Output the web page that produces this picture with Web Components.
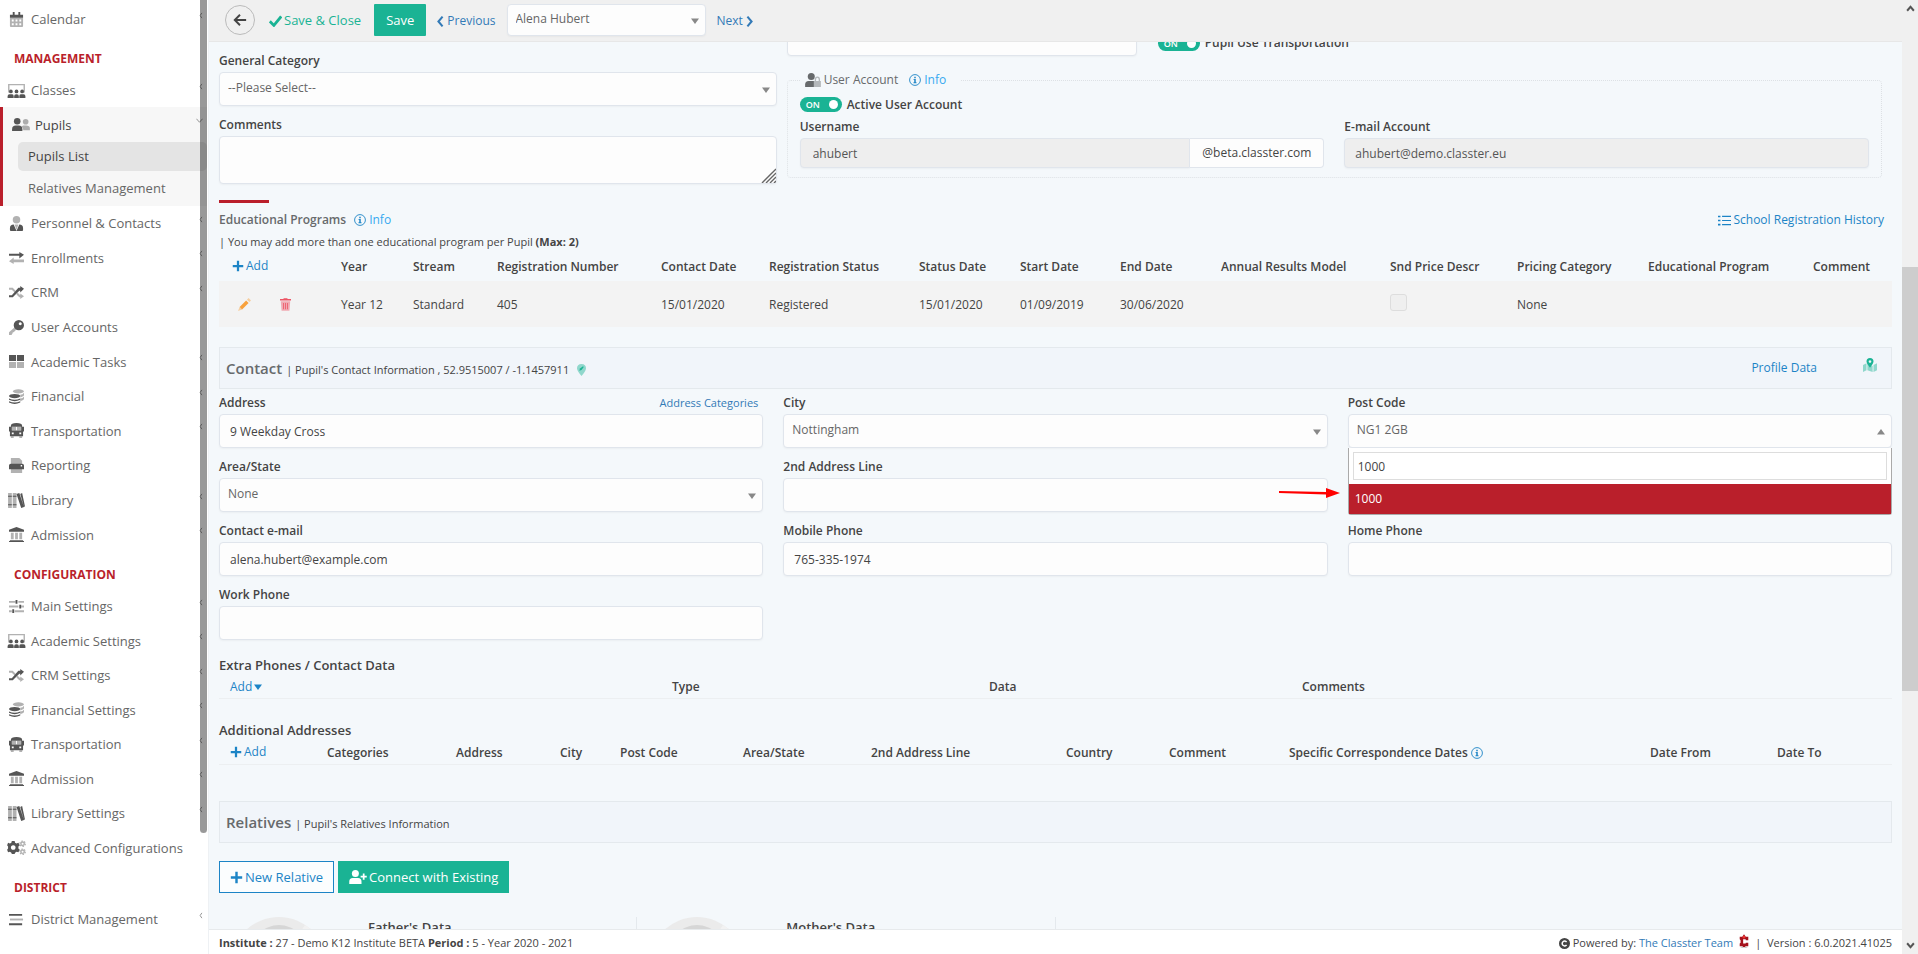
<!DOCTYPE html>
<html lang="en">
  <head>
    <meta charset="UTF-8" />
    <meta name="viewport" content="width=device-width, initial-scale=1.0" />
    <title>Pupil</title>
    <style>
      body {
        margin: 0;
        font: 12px/20px 'Open Sans', 'Noto Sans', sans-serif;
        color: #444;
        background: #f4f8fb;
      }
    </style>
  </head>
  <body>
    <app-shell>
      <side-nav slot="side"></side-nav>
      <top-bar slot="top"></top-bar>
      <pupil-form></pupil-form>
      <page-footer slot="bottom"></page-footer>
      <page-scroll slot="scroll"></page-scroll>
    </app-shell>

    <template id="app-shell">
      <style>
        :host {
          display: grid;
          grid-template-columns: 209px minmax(0, 1fr) 16px;
          height: 100vh;
          overflow: hidden;
        }
        .page {
          display: grid;
          grid-template-rows: auto minmax(0, 1fr) auto;
          min-height: 0;
        }
        .view {
          overflow: hidden;
        }
      </style>
      <slot name="side"></slot>
      <div class="page">
        <slot name="top"></slot>
        <main class="view"><slot></slot></main>
        <slot name="bottom"></slot>
      </div>
      <slot name="scroll"></slot>
    </template>

    <template id="top-bar">
      <style>
        :host {
          display: flex;
          align-items: center;
          height: 40px;
          padding: 0 0 1px 16px;
          background: #f0f0f0;
          border-bottom: 1px solid #e7e7e7;
          font-size: 13px;
        }
        button {
          font: inherit;
          cursor: pointer;
        }
        .back {
          display: grid;
          place-items: center;
          width: 30px;
          height: 30px;
          padding: 0;
          border: 1px solid #bbb;
          border-radius: 50%;
          background: none;
          color: #444;
        }
        .close {
          display: flex;
          align-items: center;
          gap: 2px;
          margin: 0 13px 0 14px;
          padding: 0;
          border: 0;
          background: none;
          color: #1ab394;
        }
        .save {
          height: 32px;
          padding: 0 12px;
          border: 0;
          border-radius: 1px;
          background: #1ab394;
          color: #fff;
        }
        a {
          display: flex;
          align-items: center;
          gap: 3px;
          margin: 2px 11px 0;
          color: #337ab7;
          font-size: 12px;
          text-decoration: none;
        }
        select-field {
          width: 199px;
          font-size: 12px;
        }
      </style>
      <button class="back" aria-label="Back"><app-icon name="back" size="14"></app-icon></button>
      <button class="close"><app-icon name="check" size="13"></app-icon>Save &amp; Close</button>
      <button class="save">Save</button>
      <a href="#"><app-icon name="prev" size="11"></app-icon>Previous</a>
      <select-field name="Pupil" value="Alena Hubert" height="32"></select-field>
      <a href="#">Next<app-icon name="next" size="11"></app-icon></a>
    </template>

    <template id="pupil-form">
      <style>
        /* the form is scrolled 20px under the top bar */
        :host {
          display: block;
          margin-top: -20px;
          padding: 0 10px;
        }
        a {
          color: #1c84c6;
          text-decoration: none;
        }
        .top {
          display: grid;
          grid-template-columns: minmax(0, 1fr) minmax(0, 2fr);
        }
        .general {
          display: grid;
          gap: 8px;
          align-content: start;
          padding-top: 28px;
        }
        .account {
          padding-left: 10px;
        }
        .transport {
          display: grid;
          grid-template-columns: 350px 1fr;
          gap: 21px;
          align-items: center;
          margin-bottom: 14px;
        }
        .transport toggle-switch {
          padding-top: 8px;
        }
        fieldset {
          min-width: 0;
          margin: 0 10px 0 0;
          padding: 7px 12px 9px 12px;
          border: 1px dotted #dde1e5;
          border-radius: 4px;
        }
        legend {
          display: flex;
          align-items: center;
          gap: 3px;
          height: 20px;
          padding: 0 14px 0 5px;
          color: #676a6c;
        }
        legend info-link {
          margin-left: 8px;
        }
        .pair {
          display: grid;
          grid-template-columns: minmax(0, 1fr) minmax(0, 1fr);
          gap: 20px;
          margin-top: 4px;
        }
        .mark {
          width: 50px;
          height: 3px;
          margin: 16px 0 7px;
          background: #ba1f2b;
        }
        .heading {
          display: flex;
          align-items: center;
          gap: 8px;
        }
        h3,
        h4 {
          margin: 0;
          font-size: 12px;
          font-weight: 600;
          color: #676a6c;
        }
        h4 {
          font-size: 13px;
          color: #444;
        }
        .history {
          display: flex;
          align-items: center;
          gap: 2px;
          margin-left: auto;
          padding-right: 8px;
        }
        p {
          margin: 2px 0 0;
          font-size: 11px;
        }
        p b {
          font-weight: 700;
        }
        panel-bar {
          margin-top: 20px;
        }
        .map {
          color: #1ab394;
        }
        .contact {
          display: grid;
          grid-template-columns: repeat(3, minmax(0, 1fr));
          gap: 8px 20px;
          margin: 3px 0 15px;
        }
        .work {
          grid-column: 1;
        }
        phone-table {
          margin-bottom: 21px;
        }
        address-table {
          margin-bottom: 36px;
        }
        .actions {
          display: flex;
          gap: 4px;
          margin: 18px 0 24px;
        }
        button {
          display: flex;
          align-items: center;
          gap: 2px;
          height: 32px;
          padding: 0 10px;
          border: 1px solid #1c84c6;
          background: #fbfdfe;
          color: #1c84c6;
          font: 13px/20px 'Open Sans', 'Noto Sans', sans-serif;
        }
        .primary {
          border-color: #1ab394;
          background: #1ab394;
          color: #fff;
        }
        .people {
          display: grid;
          grid-template-columns: repeat(4, minmax(0, 1fr));
        }
      </style>
      <section class="top">
        <div class="general">
          <select-field label="General Category" value="--Please Select--"></select-field>
          <text-area label="Comments"></text-area>
        </div>
        <div class="account">
          <div class="transport">
            <text-field name="Transportation code"></text-field>
            <toggle-switch>Pupil Use Transportation</toggle-switch>
          </div>
          <fieldset>
            <legend>
              <app-icon name="userlock" size="14"></app-icon>User Account
              <info-link>Info</info-link>
            </legend>
            <toggle-switch>Active User Account</toggle-switch>
            <div class="pair">
              <text-field label="Username" value="ahubert" addon="@beta.classter.com" disabled></text-field>
              <text-field label="E-mail Account" value="ahubert@demo.classter.eu" disabled></text-field>
            </div>
          </fieldset>
        </div>
      </section>

      <div class="mark"></div>
      <div class="heading">
        <h3>Educational Programs</h3>
        <info-link>Info</info-link>
        <a class="history" href="#"><app-icon name="list" size="13"></app-icon>School Registration History</a>
      </div>
      <p>| You may add more than one educational program per Pupil <b>(Max: 2)</b></p>
      <program-table></program-table>

      <panel-bar heading="Contact" note="Pupil's Contact Information , 52.9515007 / -1.1457911">
        <app-icon slot="mark" name="pin" size="12"></app-icon>
        <a href="#">Profile Data</a>
        <a class="map" href="#" aria-label="Map"><app-icon name="map" size="14"></app-icon></a>
      </panel-bar>
      <section class="contact">
        <text-field label="Address" value="9 Weekday Cross" link="Address Categories"></text-field>
        <select-field label="City" value="Nottingham"></select-field>
        <select-field label="Post Code" value="NG1 2GB" open>
          <search-menu slot="menu" value="1000"></search-menu>
        </select-field>
        <select-field label="Area/State" value="None"></select-field>
        <text-field label="2nd Address Line"></text-field>
        <text-field class="work" label="Contact e-mail" value="alena.hubert@example.com"></text-field>
        <text-field label="Mobile Phone" value="765-335-1974"></text-field>
        <text-field label="Home Phone"></text-field>
        <text-field class="work" label="Work Phone"></text-field>
      </section>

      <h4>Extra Phones / Contact Data</h4>
      <phone-table></phone-table>
      <h4>Additional Addresses</h4>
      <address-table></address-table>

      <panel-bar heading="Relatives" note="Pupil's Relatives Information"></panel-bar>
      <div class="actions">
        <button><app-icon name="plus" size="13"></app-icon>New Relative</button>
        <button class="primary"><app-icon name="userplus" size="14"></app-icon>Connect with Existing</button>
      </div>
      <section class="people">
        <relative-card>Father's Data</relative-card>
        <relative-card>Mother's Data</relative-card>
      </section>
    </template>

    <script>
      // two-tone icons on a 16px high grid, .s is the lighter tone
      const icons = {
        calendar: [16, '<path d="M1 3h14v3H1zM4 0h2v3H4zM10 0h2v3h-2z"/><path class="s" d="M1 6v9q0 1 1 1h12q1 0 1-1V6zm2 2h2v2H3zm4 0h2v2H7zm4 0h2v2h-2zM3 12h2v2H3zm4 0h2v2H7zm4 0h2v2h-2z" fill-rule="evenodd"/>'],
        classes: [20, '<path class="s" d="M1 1h18v9h-1.500V2.500H2.500V10H1z"/><circle cx="4" cy="9" r="2"/><circle cx="10" cy="9" r="2"/><circle cx="16" cy="9" r="2"/><path d="M.5 16v-2q0-2 2-2h3q1.500 0 1.500 2v2zM7.500 16v-2q0-2 2-2h1q2 0 2 2v2zM13 16v-2q0-2 1.500-2h3q2 0 2 2v2z"/>'],
        pupils: [20, '<circle cx="6.500" cy="4.500" r="3.500"/><path d="M1 15v-2q0-4 4-4h3q4 0 4 4v2z"/><g class="s"><circle cx="15.500" cy="5" r="3"/><path d="M13 9h3q4 0 4 3v2h-7q0-3-2-4z"/></g>'],
        person: [16, '<path class="s" d="M8 0a4 4 0 0 1 0 8a4 4 0 0 1 0-8zM6 9h4l-2 6z"/><path d="M5 9l3 7l3-7q4 0 4 4v2q0 1-1 1H2q-1 0-1-1v-2q0-4 4-4z"/>'],
        enroll: [16, '<path d="M0 4h11V2l5 3l-5 4V6H0z"/><path class="s" d="M16 10H5V8l-5 4l5 3v-2h11z"/>'],
        shuffle: [16, '<path class="s" d="M0 3h4l3 3-1 2-3-3H0zM8 10l1-2 3 3v-2l4 3-4 3v-2h-1z"/><path d="M0 11h3l7-8h2V1l4 3-4 4V6h-1l-7 7H0z"/>'],
        key: [16, '<path class="s" d="M7 7l2 2-4 4-1 0v1l-1 1v1H0v-3z"/><path fill-rule="evenodd" d="M10.500 0a5.500 5.500 0 1 1 0 11a5.500 5.500 0 0 1 0-11zm1.500 2.500a1.600 1.600 0 1 0 .01 0z"/>'],
        tasks: [16, '<path d="M0 1h7.500v6.500H0zM8.500 1H16v6.500H8.500z"/><path class="s" d="M0 8.500h7.500V15H0zM8.500 8.500H16V15H8.500z"/>'],
        coins: [16, '<g class="s"><ellipse cx="10" cy="2.500" rx="6" ry="2.200"/><path d="M12 6q3 0 4-2v3q-1 1-4 2zM12 10q3 0 4-2v3q-1 1-4 2z"/></g><ellipse cx="6" cy="7.500" rx="6" ry="2.300"/><path d="M0 10q6 3 12 0v1.500q-6 3-12 0zM0 13q6 3 12 0v1.500q-6 3-12 0z"/>'],
        bus: [16, '<path fill-rule="evenodd" d="M8 0q6 0 6 3v1h2v5h-1v5H1V9H0V4h2V3q0-3 6-3zM3 4v4h10V4zm0 6v2h2v-2zm8 0v2h2v-2z"/><path class="s" d="M3 4h4.500v4H3zM8.500 4H13v4H8.500zM2 14h3v2H2zM11 14h3v2h-3z"/>'],
        printer: [16, '<path class="s" d="M2 0h9l3 3v4H2zM2 11h12v5H2z"/><path fill-rule="evenodd" d="M2 6h12q2 0 2 2v4H0V8q0-2 2-2zm10.500 1.500v1.500h1.500V7.500z"/>'],
        books: [18, '<g class="s"><path d="M0 0h4v16H0zM5 0h4v16H5z"/></g><path d="M0 3h4v1H0zM0 12h4v1H0zM5 3h4v1H5zM5 12h4v1H5zM9 1l3-1 5 15-3 1zM13 1l2-1 3 14-1 1z"/>'],
        bank: [16, '<path d="M8 0l8 3v2H0V3zM1 14h14v1h1v1H0v-1h1z"/><path class="s" d="M2 6h3v7H2zM6.500 6h3v7h-3zM11 6h3v7h-3z"/>'],
        sliders: [16, '<path class="s" d="M0 2h7v2H0zM10 2h6v2h-6zM0 7h10v2H0zM13 7h3v2h-3zM0 12h3v2H0zM6 12h10v2H6z"/><path d="M7 1h2v4H7zM11 6h2v4h-2zM3.500 11h2v4h-2z"/>'],
        cogs: [20, '<path fill-rule="evenodd" d="M5 1h3l.5 2 1.500.8 2-.8 1.500 2.500L12 7v2l1.500 1.500L12 13l-2-.5-1.500 1L8 15H5l-.5-1.500-1.500-1L1 13l-1-2.500L1 9V7L0 5.500 1 3l2 .8L4.500 3zM6.500 5.500a2.500 2.500 0 1 0 .01 0z"/><g fill="none" stroke="currentColor" class="s" stroke-width="1.500"><circle cx="16.500" cy="4" r="2.800" stroke-dasharray="1.500 1.400"/><circle cx="16.500" cy="12.500" r="2.800" stroke-dasharray="1.500 1.400"/><circle cx="16.500" cy="4" r="1.800"/><circle cx="16.500" cy="12.500" r="1.800"/></g>'],
        bars: [16, '<path d="M0 2h14v2H0zM0 12h14v2H0z"/><path class="s" d="M1 7h14v2H1z"/>'],
        back: [16, '<path d="M8 2L2 8l6 6M2 8h13" fill="none" stroke="currentColor" stroke-width="2.200"/>'],
        check: [16, '<path d="M1 9l5 5L15 3" fill="none" stroke="currentColor" stroke-width="3.400"/>'],
        prev: [10, '<path d="M8 1L2 8l6 7" fill="none" stroke="currentColor" stroke-width="3"/>'],
        next: [10, '<path d="M2 1l6 7-6 7" fill="none" stroke="currentColor" stroke-width="3"/>'],
        left: [8, '<path d="M6 2L2 8l4 6" fill="none" stroke="currentColor" stroke-width="2"/>'],
        down: [16, '<path d="M1 4l7 8 7-8" fill="none" stroke="currentColor" stroke-width="2"/>'],
        up: [16, '<path d="M2 12l6-7 6 7" fill="none" stroke="currentColor" stroke-width="3.500"/>'],
        downbold: [16, '<path d="M2 4l6 7 6-7" fill="none" stroke="currentColor" stroke-width="3.500"/>'],
        tri: [16, '<path d="M0 3h16L8 14z"/>'],
        triup: [16, '<path d="M0 13h16L8 2z"/>'],
        plus: [16, '<path d="M6.500 1h3v5.500H15v3H9.500V15h-3V9.500H1v-3h5.500z"/>'],
        info: [16, '<circle cx="8" cy="8" r="7.200" fill="none" stroke="currentColor" stroke-width="1.200"/><path d="M7 3.500h2v2H7zM6 6.500h3V11h1v1.200H6V11h1V7.700H6z"/>'],
        list: [16, '<path d="M0 2h3v2H0zM0 7h3v2H0zM0 12h3v2H0zM5 2.300h11v1.400H5zM5 7.300h11v1.400H5zM5 12.300h11v1.400H5z"/>'],
        pencil: [16, '<path class="s" d="M11 2l2-2 3 3-2 2zM2 11l3 3-5 2z"/><path d="M10 3l3 3-8 8-3-3z"/>'],
        trash: [14, '<path d="M0 1h4l1-1h4l1 1h4v2H0z"/><path class="s" d="M1 4h12l-1 12H2z"/><path d="M4 6h1v8H4zM6.500 6h1v8h-1zM9 6h1v8H9z"/>'],
        pin: [12, '<path class="s" d="M6 0q6 0 6 6q0 3-6 10Q0 9 0 6q0-6 6-6z"/><path d="M3 9l1-3 4-3 1 1-3 4z"/>'],
        map: [16, '<path class="s" d="M0 8l4-2v8l-4 2zM5 6l6 3v7l-6-2zM12 8l4-2v8l-4 2z"/><path fill-rule="evenodd" d="M8 0q4 0 4 4q0 2-4 7Q4 6 4 4q0-4 4-4zm0 2.500a1.500 1.500 0 1 0 .01 0z"/>'],
        userlock: [18, '<circle cx="7" cy="4" r="4"/><path d="M0 16v-3q0-4 4-4h6v7z"/><path class="s" fill-rule="evenodd" d="M11 9V7.500q0-3.500 3-3.500t3 3.500V9h1v7h-8V9zm1.500 0h3V7.500q0-2-1.500-2t-1.500 2z"/>'],
        userplus: [20, '<circle cx="7" cy="4" r="4"/><path d="M0 16v-3q0-4 4-4h6q4 0 4 4v3zM15.500 4h2v2.500H20v2h-2.500V11h-2V8.500H13v-2h2.500z"/>'],
        copy: [16, '<circle cx="8" cy="8" r="8"/><path d="M11 6a3.500 3.500 0 1 0 0 4" fill="none" stroke="#fff" stroke-width="2.200"/>'],
        logo: [14, '<path d="M2 3h3l2-3 2 3h3v4H9V6H6v5h3v-1h3v4H9q-2 2-4 0H2v-3l1-1V7L2 6z" fill="#a5121c"/><circle cx="7" cy="3.500" r="1.500" fill="#e33"/><path d="M3 15q4 2 8 0" stroke="#bbb" fill="none"/>']
      }

      class AppIcon extends HTMLElement {
        constructor() {
          super()
          const [w, body] = icons[this.getAttribute('name')]
          const size = Number(this.getAttribute('size') || 15)
          this.attachShadow({ mode: 'open' }).innerHTML = `
            <style>
              :host { display: inline-flex; flex: none; }
              svg { display: block; fill: currentColor; }
              .s { opacity: 0.45; }
            </style>
            <svg width="${Math.round((size * w) / 16)}" height="${size}" viewBox="0 0 ${w} 16" aria-hidden="true">${body}</svg>`
        }
      }

      // shared rules of labels and boxes
      const fieldStyle = `
        :host { display: block; min-width: 0; }
        .head { display: flex; justify-content: space-between; height: 22px; line-height: 22px; padding-right: 5px; }
        label { font-weight: 600; color: #444; }
        input, select, textarea {
          box-sizing: border-box; width: 100%; margin: 0; border: 1px solid #e0e5ec; border-radius: 4px;
          background: #fdfdfd; color: #444; font: inherit; box-shadow: 0 1px 2px rgba(0, 0, 0, 0.04);
        }
        a { color: #337ab7; font-size: 11px; text-decoration: none; }
      `

      class TextField extends HTMLElement {
        constructor() {
          super()
          const label = this.getAttribute('label')
          const link = this.getAttribute('link')
          const addon = this.getAttribute('addon')
          this.attachShadow({ mode: 'open' }).innerHTML = `
            <style>
              ${fieldStyle}
              input { height: 34px; padding: 0 10px; }
              input:disabled { height: 30px; background: #eee; color: #555; }
              .box { display: flex; }
              .with-addon input { flex: 1; min-width: 0; border-radius: 4px 0 0 4px; padding-left: 12px; }
              .addon { height: 28px; line-height: 28px; padding: 0 12px; background: #fdfdfd; border: 1px solid #e0e5ec; border-left: 0; border-radius: 0 4px 4px 0; }
            </style>
            ${label ? `<div class="head"><label for="f">${label}</label>${link ? `<a href="#">${link}</a>` : ''}</div>` : ''}
            <div class="box ${addon ? 'with-addon' : ''}">
              <input id="f" type="text" value="${this.getAttribute('value') || ''}"
                ${this.hasAttribute('disabled') ? 'disabled' : ''} ${label ? '' : `aria-label="${this.getAttribute('name')}"`} />
              ${addon ? `<span class="addon">${addon}</span>` : ''}
            </div>`
        }
      }

      class SelectField extends HTMLElement {
        constructor() {
          super()
          const label = this.getAttribute('label')
          const open = this.hasAttribute('open')
          this.attachShadow({ mode: 'open' }).innerHTML = `
            <style>
              ${fieldStyle}
              .box { position: relative; display: grid; align-items: center; }
              select { grid-area: 1 / 1; appearance: none; height: ${this.getAttribute('height') || 34}px; padding: 0 24px 3px 8px; color: #666; }
              app-icon { grid-area: 1 / 1; justify-self: end; margin: 2px 7px 0 0; color: #888; pointer-events: none; }
              ::slotted(*) { position: absolute; top: 100%; left: 0; right: 0; z-index: 2; }
            </style>
            ${label ? `<div class="head"><label for="f">${label}</label></div>` : ''}
            <div class="box">
              <select id="f" ${label ? '' : `aria-label="${this.getAttribute('name')}"`}><option>${this.getAttribute('value')}</option></select>
              <app-icon name="${open ? 'triup' : 'tri'}" size="8"></app-icon>
              <slot name="menu"></slot>
            </div>`
        }
      }

      class TextArea extends HTMLElement {
        constructor() {
          super()
          this.attachShadow({ mode: 'open' }).innerHTML = `
            <style>
              ${fieldStyle}
              .box { display: grid; align-items: end; }
              textarea { grid-area: 1 / 1; display: block; height: 48px; resize: none; }
              svg { grid-area: 1 / 1; justify-self: end; margin: 0 1px 1px 0; }
            </style>
            <div class="head"><label for="f">${this.getAttribute('label')}</label></div>
            <div class="box">
              <textarea id="f"></textarea>
              <svg width="15" height="15" viewBox="0 0 15 15" stroke="#666" stroke-width="1.400" aria-hidden="true"><path d="M1 15L15 1M5 15L15 5M9 15l6-6M13 15l2-2"/></svg>
            </div>`
        }
      }

      // open list of a searchable select, with a pointer to the highlighted option
      class SearchMenu extends HTMLElement {
        constructor() {
          super()
          const value = this.getAttribute('value')
          this.attachShadow({ mode: 'open' }).innerHTML = `
            <style>
              :host { display: block; background: #fff; border: 1px solid #aaa; border-top: 0; border-radius: 0 0 3px 3px; }
              input { box-sizing: border-box; display: block; width: calc(100% - 8px); height: 28px; margin: 4px; padding: 0 4px; border: 1px solid #ddd; font: inherit; color: #444; }
              ul { margin: 0; padding: 0; list-style: none; }
              li { height: 30px; line-height: 30px; padding-left: 6px; background: #ba1f2b; color: #fff; }
              svg { position: absolute; right: calc(100% + 9px); bottom: 16px; }
            </style>
            <input type="search" aria-label="Search" value="${value}" />
            <ul role="listbox"><li role="option">${value}</li></ul>
            <svg width="61" height="10" viewBox="0 0 61 10" fill="#f00" aria-hidden="true"><path d="M0 3l47 1V0l14 5-14 5V6.500L0 5z"/></svg>`
        }
      }

      class ToggleSwitch extends HTMLElement {
        constructor() {
          super()
          this.attachShadow({ mode: 'open' }).innerHTML = `
            <style>
              :host { display: block; }
              label { display: flex; align-items: center; gap: 5px; height: 15px; font-weight: 600; }
              input { position: absolute; opacity: 0; width: 42px; height: 15px; margin: 0; }
              .track { display: flex; align-items: center; justify-content: space-between; box-sizing: border-box; width: 42px; height: 15px; padding: 0 4px 0 6px; border-radius: 8px; background: #1ab394; color: #fff; font-size: 9px; line-height: 15px; }
              .knob { width: 9px; height: 9px; border-radius: 50%; background: #fff; }
            </style>
            <label><input type="checkbox" checked /><span class="track">ON<span class="knob"></span></span><slot></slot></label>`
        }
      }

      class InfoLink extends HTMLElement {
        constructor() {
          super()
          this.attachShadow({ mode: 'open' }).innerHTML = `
            <style>
              :host { display: inline-flex; }
              a { display: flex; align-items: center; gap: 3px; color: #36a9f0; text-decoration: none; }
              app-icon { color: #1c84c6; }
            </style>
            <a href="#"><app-icon name="info" size="12"></app-icon><slot></slot></a>`
        }
      }

      class PanelBar extends HTMLElement {
        constructor() {
          super()
          this.attachShadow({ mode: 'open' }).innerHTML = `
            <style>
              :host { display: flex; align-items: center; gap: 4px; box-sizing: border-box; height: 42px; padding: 0 14px 0 6px; background: #f1f5fa; border: 1px solid #e4e9ed; }
              h2 { margin: 0; font-size: 15px; font-weight: 600; color: #676a6c; }
              .note { padding-top: 3px; font-size: 11px; }
              .links { display: flex; align-items: center; gap: 46px; margin-left: auto; }
              ::slotted(app-icon) { margin: 3px 0 0 4px; color: #1ab394; }
            </style>
            <h2>${this.getAttribute('heading')}</h2>
            <span class="note">| ${this.getAttribute('note')}</span>
            <slot name="mark"></slot>
            <div class="links"><slot></slot></div>`
        }
      }

      const tableStyle = `
        :host { display: block; }
        table { width: 100%; table-layout: fixed; border-collapse: collapse; }
        th, td { padding: 0 0 0 8px; text-align: left; white-space: nowrap; font-weight: 600; }
        th:first-child { padding-left: 11px; font-weight: 400; }
        th { height: 23px; border-bottom: 1px solid #eceff1; }
        td { font-weight: 400; }
        a { display: inline-flex; align-items: center; gap: 2px; color: #1c84c6; text-decoration: none; }
        info-link { vertical-align: top; }
      `
      const columns = (list) => `<colgroup>${list.map((c) => `<col style="width: ${c[0]}px" />`).join('')}</colgroup>`
      const headCells = (list) => list.map((c) => `<th>${c[1]}</th>`).join('')
      const add = '<a href="#"><app-icon name="plus" size="12"></app-icon>Add</a>'

      class ProgramTable extends HTMLElement {
        constructor() {
          super()
          const list = [
            [114, add, ''], [72, 'Year', 'Year 12'], [84, 'Stream', 'Standard'], [164, 'Registration Number', '405'],
            [108, 'Contact Date', '15/01/2020'], [150, 'Registration Status', 'Registered'], [101, 'Status Date', '15/01/2020'],
            [100, 'Start Date', '01/09/2019'], [101, 'End Date', '30/06/2020'], [169, 'Annual Results Model', ''],
            [127, 'Snd Price Descr', '<input type="checkbox" aria-label="Snd Price Descr" />'], [131, 'Pricing Category', 'None'],
            [165, 'Educational Program', ''], [87, 'Comment', '']
          ]
          this.attachShadow({ mode: 'open' }).innerHTML = `
            <style>
              ${tableStyle}
              th { height: 29px; border: 0; }
              th:first-child { padding-left: 13px; }
              td { height: 45px; padding-top: 1px; background: #f3f3f3; }
              .tools { display: flex; align-items: center; gap: 29px; padding-left: 11px; }
              .edit { color: #f8a13c; }
              .delete { color: #ed5565; }
              input { display: block; appearance: none; width: 17px; height: 17px; margin: 0 0 5px; border: 1px solid #ddd; border-radius: 3px; background: #efefef; }
            </style>
            <table>
              ${columns(list)}
              <thead><tr>${headCells(list)}</tr></thead>
              <tbody><tr>
                <td><div class="tools">
                  <a class="edit" href="#" aria-label="Edit"><app-icon name="pencil" size="13"></app-icon></a>
                  <a class="delete" href="#" aria-label="Delete"><app-icon name="trash" size="13"></app-icon></a>
                </div></td>
                ${list.slice(1).map((c) => `<td>${c[2]}</td>`).join('')}
              </tr></tbody>
            </table>`
        }
      }

      class PhoneTable extends HTMLElement {
        constructor() {
          super()
          const list = [
            [445, '<a href="#">Add<app-icon name="tri" size="8"></app-icon></a>'],
            [317, 'Type'], [313, 'Data'], [598, 'Comments']
          ]
          this.attachShadow({ mode: 'open' }).innerHTML = `
            <style>${tableStyle}</style>
            <table>${columns(list)}<thead><tr>${headCells(list)}</tr></thead></table>`
        }
      }

      class AddressTable extends HTMLElement {
        constructor() {
          super()
          const list = [
            [100, add], [129, 'Categories'], [104, 'Address'], [60, 'City'], [123, 'Post Code'], [128, 'Area/State'],
            [195, '2nd Address Line'], [103, 'Country'], [120, 'Comment'],
            [361, 'Specific Correspondence Dates <info-link></info-link>'], [127, 'Date From'], [123, 'Date To']
          ]
          this.attachShadow({ mode: 'open' }).innerHTML = `
            <style>${tableStyle} th { padding-top: 1px; } info-link { height: 20px; }</style>
            <table>${columns(list)}<thead><tr>${headCells(list)}</tr></thead></table>`
        }
      }

      class RelativeCard extends HTMLElement {
        constructor() {
          super()
          this.attachShadow({ mode: 'open' }).innerHTML = `
            <style>
              :host { display: flex; gap: 41px; padding-left: 12px; height: 120px; border-right: 1px solid #e4e9ed; }
              h4 { margin: 0; font-size: 13px; font-weight: 600; }
            </style>
            <svg width="96" height="96" viewBox="0 0 96 96" aria-hidden="true">
              <circle cx="48" cy="48" r="48" fill="#ebebeb"/><path d="M48 48L74 8a48 48 0 0 1 22 40z" fill="#f2f2f2"/>
              <circle cx="48" cy="36" r="28" fill="#d6d6d6"/><path d="M8 74q40-30 80 0a48 48 0 0 1-80 0z" fill="#d6d6d6"/>
            </svg>
            <h4><slot></slot></h4>`
        }
      }

      class PageFooter extends HTMLElement {
        constructor() {
          super()
          this.attachShadow({ mode: 'open' }).innerHTML = `
            <style>
              :host { display: flex; justify-content: space-between; padding: 3px 10px 1px; background: #fff; border-top: 1px solid #e7eaec; font-size: 11px; }
              b { font-weight: 700; }
              div { display: flex; align-items: center; gap: 3px; }
              a { color: #337ab7; text-decoration: none; }
              .logo { margin: 0 2px 4px; }
            </style>
            <span><b>Institute :</b> 27 - Demo K12 Institute BETA <b>Period :</b> 5 - Year 2020 - 2021</span>
            <div><app-icon name="copy" size="11"></app-icon>Powered by: <a href="#">The Classter Team</a>
              <app-icon class="logo" name="logo" size="14"></app-icon><span>| &nbsp;Version : 6.0.2021.41025</span></div>`
        }
      }

      class PageScroll extends HTMLElement {
        constructor() {
          super()
          this.attachShadow({ mode: 'open' }).innerHTML = `
            <style>
              :host { display: grid; grid-template-rows: 17px 250fr 424fr 246fr 17px; justify-items: center; background: #f0f0f0; color: #555; }
              app-icon { align-self: center; }
              .thumb { grid-row: 3; width: 100%; background: #cdcdcd; }
              .end { grid-row: 5; }
            </style>
            <app-icon name="up" size="9"></app-icon>
            <div class="thumb"></div>
            <app-icon class="end" name="downbold" size="9"></app-icon>`
        }
      }

      class NavItem extends HTMLElement {
        constructor() {
          super()
          const arrow = this.getAttribute('arrow')
          this.attachShadow({ mode: 'open' }).innerHTML = `
            <style>
              :host { display: flex; align-items: center; min-height: 34px; }
              :host([active]) { min-height: 35px; }
              a { display: flex; flex: 1; align-items: center; gap: 5px; padding-left: 6px; color: #666; text-decoration: none; }
              .icon { display: grid; place-items: center; width: 20px; color: #555; }
              :host([active]) a { padding-left: 7px; color: #444; }
              .arrow { margin: 0 4px 8px 0; color: #888; }
            </style>
            <a href="#"><span class="icon"><app-icon name="${this.getAttribute('icon')}" size="15"></app-icon></span><slot></slot></a>
            ${arrow ? `<app-icon class="arrow" name="${arrow}" size="7"></app-icon>` : ''}`
        }
      }

      class SideNav extends HTMLElement {
        constructor() {
          super()
          const item = ([icon, text, arrow = 'left']) => `<nav-item icon="${icon}" arrow="${arrow}">${text}</nav-item>`
          const management = [
            ['person', 'Personnel &amp; Contacts'], ['enroll', 'Enrollments'], ['shuffle', 'CRM'], ['key', 'User Accounts', ''],
            ['tasks', 'Academic Tasks'], ['coins', 'Financial'], ['bus', 'Transportation'], ['printer', 'Reporting', ''],
            ['books', 'Library'], ['bank', 'Admission']
          ]
          const configuration = [
            ['sliders', 'Main Settings'], ['classes', 'Academic Settings'], ['shuffle', 'CRM Settings'],
            ['coins', 'Financial Settings'], ['bus', 'Transportation'], ['bank', 'Admission'],
            ['books', 'Library Settings'], ['cogs', 'Advanced Configurations', '']
          ]
          this.attachShadow({ mode: 'open' }).innerHTML = `
            <style>
              :host { position: relative; display: block; box-sizing: border-box; padding: 2px 1px 0 0; border-right: 1px solid #eef1f4; background: #fff; font-size: 13px; }
              h2 { margin: 0; padding: 13px 0 4px 14px; font-size: 12px; line-height: 20px; font-weight: 700; color: #ba1f2b; }
              .list { display: grid; grid-auto-rows: 1fr; }
              .ten { min-height: 346px; }
              .eight { min-height: 276px; }
              .open { border-left: 3px solid #ba1f2b; background: #f7f7f7; padding-bottom: 3px; }
              .sub { display: block; margin-left: 15px; padding-left: 10px; border-radius: 5px; line-height: 29px; color: #666; text-decoration: none; }
              .sub + .sub { margin-top: 3px; }
              .current { background: #e4e4e4; color: #444; }
              .thumb { position: absolute; top: 0; right: 1px; width: 7px; height: 833px; border-radius: 0 0 4px 4px; background: rgba(0, 0, 0, 0.4); }
            </style>
            <nav>
              ${item(['calendar', 'Calendar'])}
              <h2>MANAGEMENT</h2>
              ${item(['classes', 'Classes'])}
              <div class="open">
                <nav-item icon="pupils" arrow="down" active>Pupils</nav-item>
                <a class="sub current" href="#">Pupils List</a>
                <a class="sub" href="#">Relatives Management</a>
              </div>
              <div class="list ten">${management.map(item).join('')}</div>
              <h2>CONFIGURATION</h2>
              <div class="list eight">${configuration.map(item).join('')}</div>
              <h2>DISTRICT</h2>
              ${item(['bars', 'District Management'])}
            </nav>
            <div class="thumb"></div>`
        }
      }

      // elements whose markup is in a template of the page
      function fromTemplate(name) {
        return class extends HTMLElement {
          constructor() {
            super()
            const content = document.getElementById(name).content
            this.attachShadow({ mode: 'open' }).appendChild(document.importNode(content, true))
          }
        }
      }

      customElements.define('app-icon', AppIcon)
      customElements.define('text-field', TextField)
      customElements.define('select-field', SelectField)
      customElements.define('text-area', TextArea)
      customElements.define('search-menu', SearchMenu)
      customElements.define('toggle-switch', ToggleSwitch)
      customElements.define('info-link', InfoLink)
      customElements.define('panel-bar', PanelBar)
      customElements.define('program-table', ProgramTable)
      customElements.define('phone-table', PhoneTable)
      customElements.define('address-table', AddressTable)
      customElements.define('relative-card', RelativeCard)
      customElements.define('page-footer', PageFooter)
      customElements.define('page-scroll', PageScroll)
      customElements.define('nav-item', NavItem)
      customElements.define('side-nav', SideNav)
      customElements.define('top-bar', fromTemplate('top-bar'))
      customElements.define('pupil-form', fromTemplate('pupil-form'))
      customElements.define('app-shell', fromTemplate('app-shell'))
    </script>
  </body>
</html>
